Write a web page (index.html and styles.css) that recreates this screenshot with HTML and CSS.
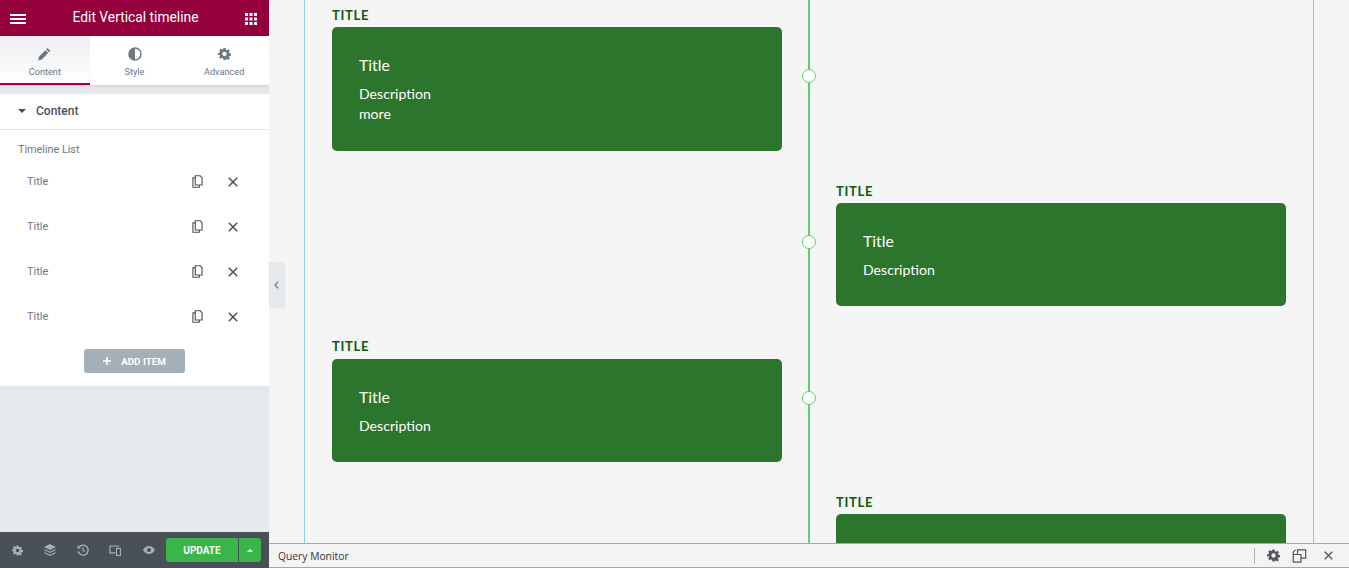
FILE: index.html
```html
<!doctype html>
<html lang="en">

<head>
  <title>Edit Vertical timeline</title>
  <meta charset="utf-8" />
  <link rel="stylesheet" href="styles.css">
</head>

<body>
  <svg class="sprites" width="0" height="0">
    <symbol id="i-gear" viewBox="0 0 24 24">
      <path fill-rule="evenodd" d="M10 1h4l.6 3.1 1.8.8 2.7-1.8 2.8 2.8-1.8 2.7.8 1.8 3.1.6v4l-3.1.6-.8 1.8 1.8 2.7-2.8 2.8-2.7-1.8-1.8.8L14 23h-4l-.6-3.1-1.8-.8-2.7 1.8-2.8-2.8 1.8-2.7-.8-1.8L0 14v-4l3.1-.6.8-1.8-1.8-2.7 2.8-2.8 2.7 1.8 1.8-.8zM12 8a4 4 0 1 0 0 8 4 4 0 0 0 0-8z" />
    </symbol>
    <symbol id="i-copy" viewBox="0 0 12 14">
      <path fill="none" stroke="currentColor" stroke-width="1.2" d="M3.6 3H1v10.2h7v-2.400M3.600 .8h5.400L11 2.800v8H3.600z" />
    </symbol>
    <symbol id="i-close" viewBox="0 0 10 10">
      <path fill="none" stroke="currentColor" stroke-width="1.5" d="M.8 .8l8.400 8.400M9.200 .8L.8 9.200" />
    </symbol>
  </svg>

  <div class="app">
    <aside class="panel">
      <header class="panel-head">
        <svg class="burger" viewBox="0 0 16 10" width="16" height="10">
          <path d="M0 0h16v2H0zM0 4h16v2H0zM0 8h16v2H0z" fill="#fff" />
        </svg>
        <h1>Edit Vertical timeline</h1>
        <svg class="apps" viewBox="0 0 12 12" width="12" height="12">
          <path d="M0 0h3v3H0zM4.500 0h3v3h-3zM9 0h3v3H9zM0 4.500h3v3H0zM4.500 4.500h3v3h-3zM9 4.500h3v3H9zM0 9h3v3H0zM4.500 9h3v3h-3zM9 9h3v3H9z" fill="#fff" />
        </svg>
      </header>

      <nav class="tabs">
        <a class="tab active">
          <svg viewBox="0 0 14 14" width="13" height="13">
            <path d="M10.300 .6l3.100 3.100-1.500 1.500-3.100-3.100zM8 2.900L11 6l-7 7-3.900 .9.900-3.900z" fill="#6d7882" />
          </svg>
          Content
        </a>
        <a class="tab">
          <svg viewBox="0 0 14 14" width="14" height="14">
            <circle cx="7" cy="7" r="6" fill="none" stroke="#6d7882" stroke-width="1.500" />
            <path d="M7 1a6 6 0 0 0 0 12z" fill="#6d7882" />
          </svg>
          Style
        </a>
        <a class="tab">
          <svg class="tab-gear" width="13" height="13"><use href="#i-gear" /></svg>
          Advanced
        </a>
      </nav>

      <section class="section">
        <h2 class="section-head"><span class="caret-down"></span>Content</h2>
        <div class="section-body">
          <div class="list-label">Timeline List</div>
          <ul class="repeater">
            <li>
              <span>Title</span>
              <svg class="copy" width="11" height="13"><use href="#i-copy" /></svg>
              <svg class="close" width="10" height="10"><use href="#i-close" /></svg>
            </li>
            <li>
              <span>Title</span>
              <svg class="copy" width="11" height="13"><use href="#i-copy" /></svg>
              <svg class="close" width="10" height="10"><use href="#i-close" /></svg>
            </li>
            <li>
              <span>Title</span>
              <svg class="copy" width="11" height="13"><use href="#i-copy" /></svg>
              <svg class="close" width="10" height="10"><use href="#i-close" /></svg>
            </li>
            <li>
              <span>Title</span>
              <svg class="copy" width="11" height="13"><use href="#i-copy" /></svg>
              <svg class="close" width="10" height="10"><use href="#i-close" /></svg>
            </li>
          </ul>
          <button class="add-item">
            <svg viewBox="0 0 8 8" width="8" height="8">
              <path d="M3.200 0h1.600v3.200H8v1.600H4.800V8H3.200V4.800H0V3.200h3.200z" fill="#fff" />
            </svg>
            ADD ITEM
          </button>
        </div>
      </section>

      <div class="panel-spacer"></div>

      <footer class="panel-foot">
        <svg class="foot-icon" width="11" height="11"><use href="#i-gear" /></svg>
        <svg class="foot-icon" viewBox="0 0 12 12" width="12" height="12">
          <path d="M6 0l6 3-6 3-6-3z" fill="#a4afb7" />
          <path d="M1 5.200l5 2.500 5-2.500 1 .8-6 3-6-3zM1 8.200l5 2.500 5-2.500 1 .8-6 3-6-3z" fill="#a4afb7" />
        </svg>
        <svg class="foot-icon" viewBox="0 0 12 12" width="12" height="12">
          <path d="M2.200 3A5 5 0 1 1 1.300 7.500" fill="none" stroke="#a4afb7" stroke-width="1.400" />
          <path d="M.5 1.200L4 4.400H.5z" fill="#a4afb7" />
          <path d="M6 3.200v3.200l2 1.200" fill="none" stroke="#a4afb7" stroke-width="1.200" />
        </svg>
        <svg class="foot-icon" viewBox="0 0 12 12" width="12" height="12">
          <path d="M1 8V2h8v1.500M0 8.800h6.500" fill="none" stroke="#a4afb7" stroke-width="1.200" />
          <rect x="7.500" y="4.500" width="4" height="7" fill="none" stroke="#a4afb7" stroke-width="1.100" />
        </svg>
        <svg class="foot-icon" viewBox="0 0 12 8" width="12" height="8">
          <path d="M0 4c2-3.400 4-4 6-4s4 .6 6 4c-2 3.400-4 4-6 4S2 7.400 0 4z" fill="#a4afb7" />
          <circle cx="6" cy="4" r="2" fill="#495157" />
        </svg>
        <div class="publish">
          <button class="update">UPDATE</button>
          <button class="update-more"><span class="caret-up"></span></button>
        </div>
      </footer>
    </aside>

    <main class="preview">
      <button class="collapse">
        <svg viewBox="0 0 5 8" width="5" height="8">
          <path d="M4.200 .6L1 4l3.200 3.400" fill="none" stroke="#6d7882" stroke-width="1.300" />
        </svg>
      </button>

      <div class="stage">
        <div class="timeline">
          <div class="line">
            <span class="dot dot-1"></span>
            <span class="dot dot-2"></span>
            <span class="dot dot-3"></span>
          </div>

          <div class="col col-left">
            <article class="event">
              <h3 class="event-label">TITLE</h3>
              <div class="card card-long">
                <h4>Title</h4>
                <p>Description<br />more</p>
              </div>
            </article>
            <article class="event event-tight">
              <h3 class="event-label">TITLE</h3>
              <div class="card">
                <h4>Title</h4>
                <p>Description</p>
              </div>
            </article>
          </div>

          <div class="col col-right">
            <article class="event">
              <h3 class="event-label">TITLE</h3>
              <div class="card">
                <h4>Title</h4>
                <p>Description</p>
              </div>
            </article>
            <article class="event">
              <h3 class="event-label">TITLE</h3>
              <div class="card"></div>
            </article>
          </div>
        </div>
      </div>

      <footer class="qm-bar">
        <span class="qm-name">Query Monitor</span>
        <span class="qm-sep"></span>
        <svg class="qm-icon" width="13" height="13"><use href="#i-gear" /></svg>
        <svg class="qm-icon" viewBox="0 0 14 14" width="15" height="14">
          <path d="M5 5V.8h8.200v8.400H9M.8 5.500h7.700v7.700H.8zM.8 5V3L3 .8" fill="none" stroke="#50575e" stroke-width="1.200" />
        </svg>
        <svg class="qm-icon qm-close" width="9" height="9"><use href="#i-close" /></svg>
      </footer>
    </main>
  </div>
</body>

</html>
```

FILE: styles.css
```css
* {
  box-sizing: border-box;
}

html,
body {
  height: 100%;
  margin: 0;
  overflow: hidden;
}

body {
  font-family: Roboto, sans-serif;
  color: #6d7882;
}

h1,
h2,
h3,
h4,
p,
ul {
  margin: 0;
  padding: 0;
}

button {
  border: 0;
  padding: 0;
  font-family: inherit;
}

.sprites {
  position: absolute;
}

.app {
  display: flex;
  height: 568px;
}

/* editor panel */
.panel {
  display: flex;
  flex-direction: column;
  width: 269px;
  flex: none;
  background: #e6e9ec;
  box-shadow: 1px 0 2px rgba(0, 0, 0, 0.08);
}

.panel-head {
  display: flex;
  align-items: center;
  justify-content: space-between;
  height: 36px;
  padding: 0 12px 0 10px;
  background: #93003c;
}

.panel-head h1 {
  margin-bottom: 2px;
  font-size: 13.800px;
  font-weight: 400;
  color: #fff;
}

.burger {
  margin-top: 2px;
}

.apps {
  margin-top: 1px;
}

.tabs {
  display: flex;
  height: 49px;
  background: #fff;
  box-shadow: 0 1px 3px rgba(0, 0, 0, 0.1);
}

.tab {
  display: flex;
  flex: 1;
  flex-direction: column;
  align-items: center;
  gap: 5px;
  padding-top: 11px;
  font-size: 9.200px;
  line-height: 12px;
  color: #6d7882;
}

.tab svg {
  height: 14px;
}

.tab.active {
  background: linear-gradient(#eceef1, #fff);
  border-bottom: 2px solid #93003c;
}

.tab-gear {
  fill: #6d7882;
}

.section {
  margin-top: 9px;
  height: 292px;
  background: #fff;
}

.section-head {
  display: flex;
  align-items: center;
  height: 36px;
  padding: 0 0 2px 18px;
  border-bottom: 1px solid #e6e9ec;
  font-size: 12px;
  font-weight: 500;
  color: #495157;
}

.caret-down {
  width: 0;
  height: 0;
  margin-right: 10px;
  border: 4px solid transparent;
  border-top: 4px solid #495157;
  border-bottom: 0;
}

.section-body {
  padding: 13px 0 0 18px;
}

.list-label {
  font-size: 10.800px;
  line-height: 13px;
}

.repeater {
  list-style: none;
  margin-top: 3px;
}

.repeater li {
  display: flex;
  align-items: center;
  height: 45px;
  padding-left: 9px;
  font-size: 11px;
  color: #6d7882;
}

.repeater li span {
  flex: 1;
}

.copy {
  color: #495157;
  margin-right: 25px;
}

.close {
  color: #495157;
  margin-right: 31px;
}

.add-item {
  display: flex;
  align-items: center;
  justify-content: center;
  gap: 10px;
  width: 101px;
  height: 24px;
  margin: 10px 0 0 66px;
  border-radius: 3px;
  background: #a4afb7;
  color: #fff;
  font-size: 9.800px;
  font-weight: 700;
}

.panel-spacer {
  flex: 1;
}

.panel-foot {
  display: flex;
  align-items: center;
  height: 36px;
  padding-left: 12px;
  background: #495157;
}

.foot-icon {
  margin-right: 21px;
  fill: #a4afb7;
}

.foot-icon:nth-child(3) {
  margin-right: 20px;
}

.foot-icon:nth-child(4) {
  margin-right: 22px;
}

.foot-icon:nth-child(5) {
  margin-right: 11px;
}

.publish {
  display: flex;
  height: 24px;
}

.update {
  width: 72px;
  border-radius: 3px 0 0 3px;
  background: #39b54a;
  color: #fff;
  font-size: 10px;
  font-weight: 700;
}

.update-more {
  display: flex;
  align-items: center;
  justify-content: center;
  width: 23px;
  border-left: 1px solid #495157;
  border-radius: 0 3px 3px 0;
  background: #39b54a;
}

.caret-up {
  border: 3.500px solid transparent;
  border-bottom: 3.500px solid #fff;
  border-top: 0;
}

/* preview */
.preview {
  position: relative;
  display: flex;
  flex: 1;
  flex-direction: column;
  min-width: 0;
  background: #f5f5f5;
}

.collapse {
  position: absolute;
  top: 262px;
  left: 0;
  z-index: 2;
  width: 15px;
  height: 45px;
  background: #e6e9ec;
  box-shadow: 1px 1px 2px rgba(0, 0, 0, 0.08);
  display: flex;
  align-items: center;
  justify-content: center;
}

.stage {
  flex: 1;
  min-height: 0;
  overflow: hidden;
  padding: 0 35px;
}

.timeline {
  position: relative;
  display: flex;
  gap: 54px;
  width: 1010px;
  height: 100%;
  padding-left: 27px;
  border-left: 1px solid #8ed1ee;
  border-right: 1px solid #8ecae6;
}

.line {
  position: absolute;
  top: 0;
  bottom: 0;
  left: 503px;
  width: 2px;
  background: #61ce70;
}

.dot {
  position: absolute;
  left: -6px;
  width: 14px;
  height: 14px;
  border: 1.500px solid #61ce70;
  border-radius: 50%;
  background: #fff;
}

.dot-1 {
  top: 69px;
}

.dot-2 {
  top: 235px;
}

.dot-3 {
  top: 391px;
}

.col {
  display: flex;
  flex-direction: column;
  flex: none;
  width: 450px;
}

.col-left {
  padding-top: 8px;
  gap: 189px;
}

.col-right {
  padding-top: 184px;
  gap: 189px;
}

.event-label {
  font-family: Lato, sans-serif;
  font-size: 13px;
  font-weight: 700;
  line-height: 15px;
  letter-spacing: 0.700px;
  color: #0c5a0c;
  margin-bottom: 4px;
}

.event-tight {
  margin-top: -1px;
}

.event-tight .event-label {
  margin-bottom: 5px;
}

.card {
  height: 103px;
  padding: 27px;
  border-radius: 5px;
  background: #2c752c;
  color: #fff;
  font-family: Lato, sans-serif;
}

.card-long {
  height: 124px;
}

.card h4 {
  font-size: 15.800px;
  font-weight: 400;
  line-height: 22px;
}

.card p {
  margin-top: 8px;
  font-size: 14.100px;
  line-height: 20px;
}

/* query monitor */
.qm-bar {
  display: flex;
  align-items: center;
  flex: none;
  height: 25px;
  padding: 0 16px 0 9px;
  border-top: 1px solid #a7a7a7;
  border-bottom: 1px solid #a7a7a7;
  background: #f3f3f3;
}

.qm-name {
  flex: 1;
  font-family: "Open Sans", sans-serif;
  font-size: 10.300px;
  color: #32373c;
}

.qm-sep {
  width: 1px;
  height: 16px;
  margin-right: 12px;
  background: #b5b5b5;
}

.qm-icon {
  margin-right: 12px;
  fill: #50575e;
  color: #50575e;
}

.qm-close {
  margin: 0 0 0 5px;
}
```
